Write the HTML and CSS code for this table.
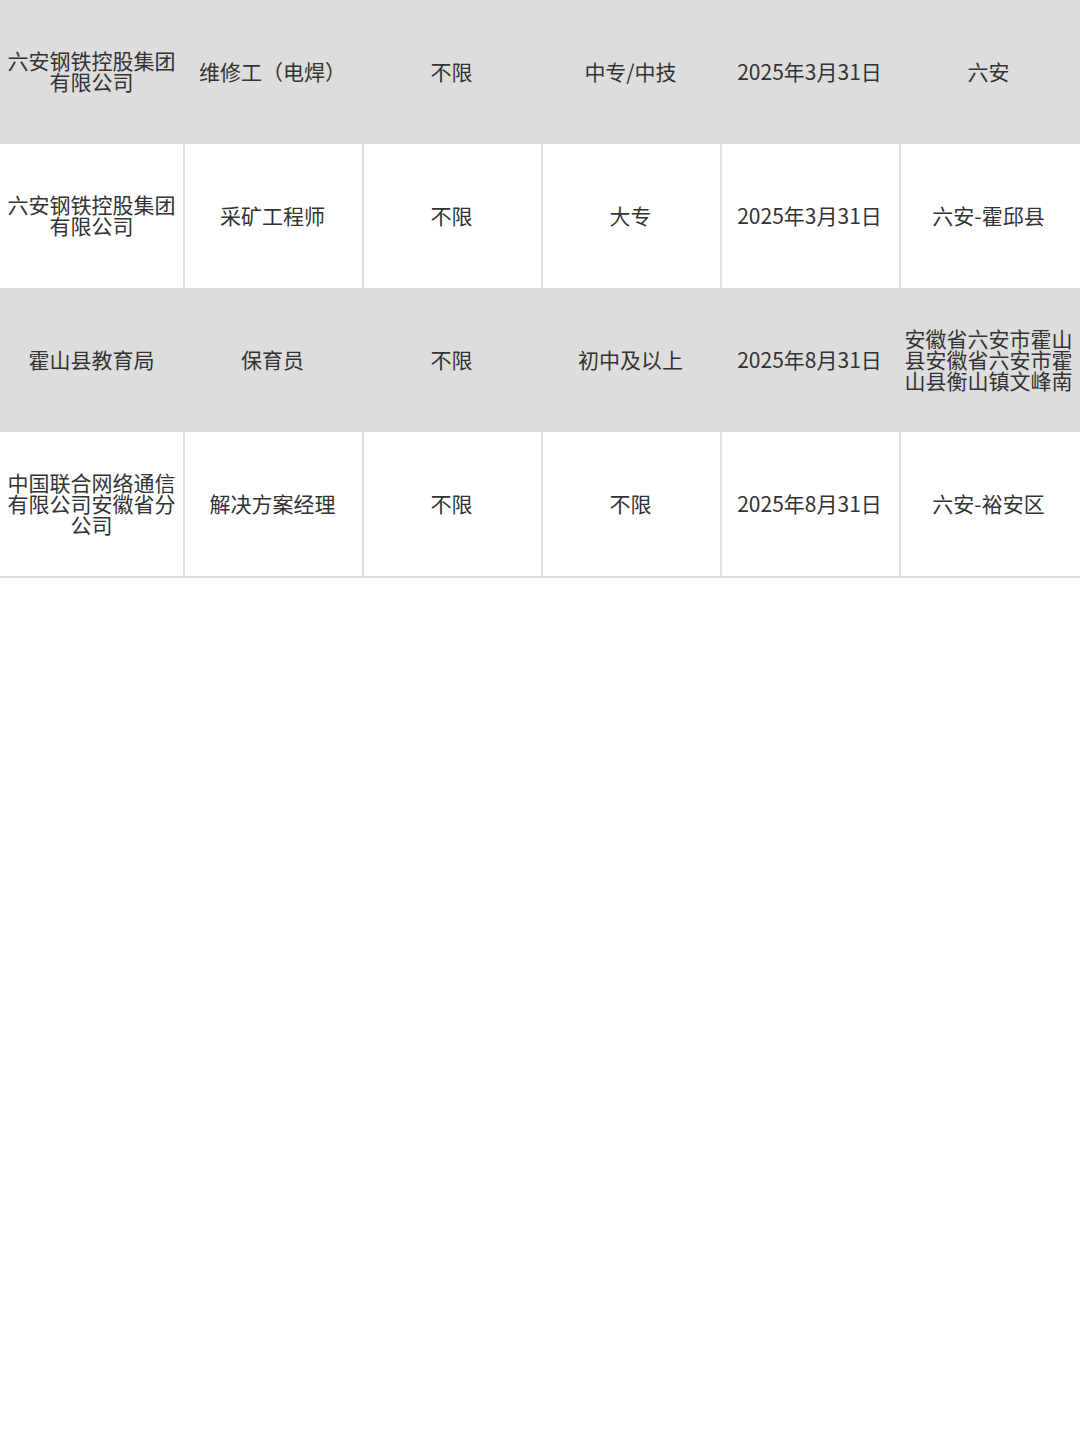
FILE: index.html
```html
<!DOCTYPE html>
<html lang="zh-CN">
<head>
<meta charset="utf-8">
<link rel="stylesheet" href="styles.css">
</head>
<body>
<div class="table">
  <div class="row gray">
    <div class="cell">六安钢铁控股集团有限公司</div>
    <div class="cell">维修工（电焊）</div>
    <div class="cell">不限</div>
    <div class="cell">中专/中技</div>
    <div class="cell">2025年3月31日</div>
    <div class="cell">六安</div>
  </div>
  <div class="row white">
    <div class="cell">六安钢铁控股集团有限公司</div>
    <div class="cell">采矿工程师</div>
    <div class="cell">不限</div>
    <div class="cell">大专</div>
    <div class="cell">2025年3月31日</div>
    <div class="cell">六安-霍邱县</div>
  </div>
  <div class="row gray">
    <div class="cell">霍山县教育局</div>
    <div class="cell">保育员</div>
    <div class="cell">不限</div>
    <div class="cell">初中及以上</div>
    <div class="cell">2025年8月31日</div>
    <div class="cell">安徽省六安市霍山县安徽省六安市霍山县衡山镇文峰南</div>
  </div>
  <div class="row white last">
    <div class="cell">中国联合网络通信有限公司安徽省分公司</div>
    <div class="cell">解决方案经理</div>
    <div class="cell">不限</div>
    <div class="cell">不限</div>
    <div class="cell">2025年8月31日</div>
    <div class="cell">六安-裕安区</div>
  </div>
</div>
</body>
</html>
```

FILE: styles.css
```css
html, body {
  margin: 0;
  padding: 0;
  background: #ffffff;
}
body {
  width: 1080px;
  height: 1444px;
  font-family: "Noto Sans CJK SC", "Noto Sans", sans-serif;
  color: #333333;
}
.table {
  display: flex;
  flex-direction: column;
}
.row {
  display: grid;
  grid-template-columns: 183px 179px 179px 179px 179px 181px;
  height: 144px;
}
.row.gray {
  background: #dddddd;
}
.row.last {
  border-bottom: 2px solid #e0e0e0;
}
.cell {
  display: flex;
  align-items: center;
  justify-content: center;
  text-align: center;
  font-size: 21px;
  line-height: 21px;
  padding: 0 5px 2px 5px;
  box-sizing: border-box;
  word-break: break-all;
}
.cell + .cell {
  padding-left: 3px;
}
.cell:last-child {
  padding-right: 7px;
}
.row.white .cell + .cell {
  border-left: 2px solid #e0e0e0;
}
.row.gray .cell + .cell {
  border-left: 2px solid transparent;
}
```
